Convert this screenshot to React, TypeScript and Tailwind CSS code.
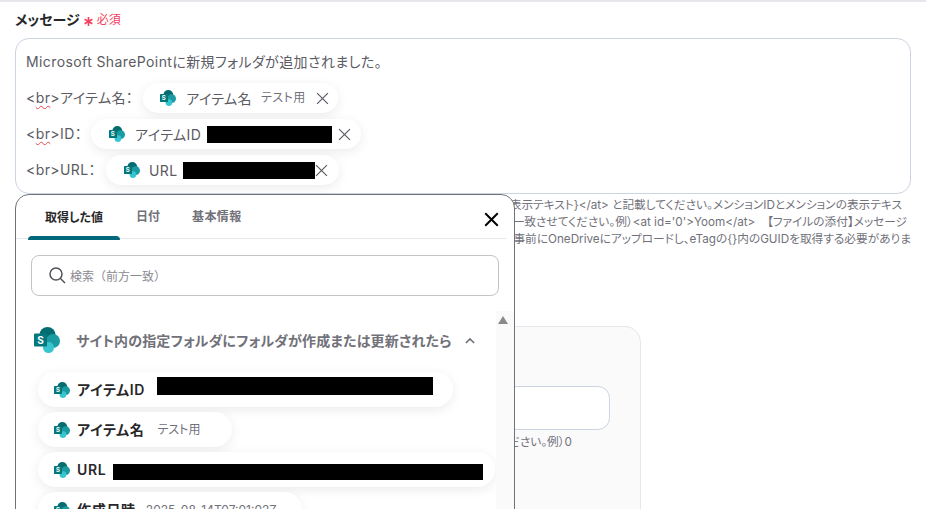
function SharePointIcon({ size }: { size: number }) {
  return (
    <svg width={size} height={size} viewBox="0 0 26 26" className="shrink-0">
      <circle cx="13.5" cy="8" r="8" fill="#036c70" />
      <circle cx="19" cy="14" r="7" fill="#1a9ba1" />
      <circle cx="14.5" cy="20.5" r="5.5" fill="#37c6d0" />
      <rect x="0" y="6.5" width="13" height="13" rx="1" fill="#03787c" />
      <text x="6.5" y="16.8" textAnchor="middle" fontSize="10" fontWeight="700" fill="#fff" fontFamily="Inter">S</text>
    </svg>
  );
}

function CloseIcon({ size, className, weight = 1.1 }: { size: number; className: string; weight?: number }) {
  return (
    <svg width={size} height={size} viewBox="0 0 12 12" className={className}>
      <path d="M1 1l10 10M11 1L1 11" stroke="currentColor" strokeWidth={weight} fill="none" />
    </svg>
  );
}

function BrLabel({ after, wavy = true }: { after: string; wavy?: boolean }) {
  return (
    <span className="whitespace-nowrap">
      &lt;
      <span className={wavy ? 'underline decoration-wavy decoration-[#e5484d] decoration-1 underline-offset-2' : ''}>br</span>
      &gt;{after}
    </span>
  );
}

function MessageRow({ label, className, children }: { label: React.ReactNode; className: string; children: React.ReactNode }) {
  return (
    <div className="flex items-center">
      <div className="pl-[10px]">{label}</div>
      <div className={`flex h-[30px] translate-y-[1px] items-center rounded-full bg-white shadow-[0_3px_12px_rgba(0,0,0,0.08)] ${className}`}>
        {children}
      </div>
    </div>
  );
}

function ValueChip({ name, width, children }: { name: string; width: string; children: React.ReactNode }) {
  return (
    <div className={`flex h-[35px] shrink-0 items-center rounded-full bg-white pl-[16px] shadow-[0_3px_12px_rgba(0,0,0,0.08)] ${width}`}>
      <SharePointIcon size={16} />
      <span className="ml-[7px] whitespace-nowrap text-[14px] font-semibold tracking-[0.7px] text-[#27272a]">{name}</span>
      {children}
    </div>
  );
}

export default function App() {
  return (
    <div className="relative h-[509px] w-[926px] overflow-hidden border-t-2 border-[#e5e7eb] bg-white pl-[15px] font-['Inter','Noto_Sans_CJK_JP',sans-serif] [font-feature-settings:'palt']">
      <div className="flex h-[36px] items-center pb-[1px]">
        <span className="text-[14px] font-semibold text-[#27272a]">メッセージ</span>
        <svg width="9" height="9" viewBox="0 0 10 10" stroke="#f43f5e" strokeWidth="1.8" className="ml-[4px] mt-[3px]">
          <path d="M5 0v10M.7 2.5l8.6 5M9.3 2.5l-8.6 5" />
        </svg>
        <span className="ml-[4px] text-[12px] text-[#f43f5e]">必須</span>
      </div>

      {/* Message input */}
      <div className="flex h-[156px] w-[896px] flex-col gap-[6px] rounded-[14px] border border-[#cbd5e1] pt-[7px] text-[14px] tracking-[0.4px] text-[#5b5b63]">
        <div className="flex h-[30px] items-center pl-[10px]">Microsoft SharePointに新規フォルダが追加されました。</div>
        <MessageRow label={<BrLabel after="アイテム名：" />} className="ml-[10px] w-[195px] pl-[17px]">
          <SharePointIcon size={16} />
          <span className="ml-[10px] whitespace-nowrap">アイテム名</span>
          <span className="ml-[9px] whitespace-nowrap text-[12px] text-[#71717a]">テスト用</span>
          <CloseIcon size={13} className="ml-[10px] text-[#5b5b63]" />
        </MessageRow>
        <MessageRow label={<BrLabel after="ID：" />} className="ml-[9px] w-[270px] pl-[18px]">
          <SharePointIcon size={16} />
          <span className="ml-[10px] whitespace-nowrap">アイテムID</span>
          <span className="ml-[6px] h-[17px] w-[125px] shrink-0 bg-black" />
          <CloseIcon size={13} className="ml-[6px] text-[#5b5b63]" />
        </MessageRow>
        <MessageRow label={<BrLabel after="URL：" wavy={false} />} className="ml-[10px] w-[233px] pl-[18px]">
          <SharePointIcon size={16} />
          <span className="ml-[9px]">URL</span>
          <span className="ml-[5px] h-[17px] w-[132px] shrink-0 bg-black" />
          <CloseIcon size={13} className="text-[#5b5b63]" />
        </MessageRow>
      </div>

      {/* Help text, mostly hidden under the popup */}
      <div className="mt-[3px] w-[896px] text-right text-[11.7px] leading-[17px] text-[#71717a]">
        <p className="whitespace-nowrap pr-[9px]">表示テキスト{'}'}&lt;/at&gt; と記載してください。メンションIDとメンションの表示テキス</p>
        <p className="whitespace-nowrap pr-[4px]">一致させてください。例）&lt;at id='0'&gt;Yoom&lt;/at&gt;　【ファイルの添付】メッセージ</p>
        <p className="whitespace-nowrap">事前にOneDriveにアップロードし、eTagの{'{}'}内のGUIDを取得する必要がありま</p>
      </div>

      {/* Card behind the popup */}
      <div className="ml-[100px] mt-[78px] h-[300px] w-[526px] rounded-[16px] border border-[#e5e7eb] bg-[#fafafa] pt-[59px]">
        <div className="h-[44px] w-[494px] rounded-[12px] border border-[#cbd5e1] bg-white" />
        <p className="mt-[4px] w-[456px] text-right text-[11.7px] leading-[17px] text-[#71717a]">ださい。例）0</p>
      </div>

      {/* Value picker popup */}
      <div className="absolute left-[15px] top-[192px] h-[340px] w-[500px] rounded-t-[14px] border border-[#71717a] bg-white">
        <div className="relative flex h-[44px] w-[490px] border-b border-[#e5e7eb] pl-[12px] text-[12px] font-semibold">
          <div className="relative flex h-[44px] w-[92px] items-center justify-center pt-[1px] text-[#27272a]">
            取得した値
            <span className="absolute bottom-[-1px] left-0 h-[4px] w-full rounded-t-[4px] bg-[#00687a]" />
          </div>
          <div className="ml-[16px] flex items-center pt-[1px] text-[#71717a]">日付</div>
          <div className="ml-[32px] flex items-center pt-[1px] tracking-[0.4px] text-[#71717a]">基本情報</div>
          <CloseIcon size={15} weight={1.6} className="absolute right-[7px] top-[17px] text-black" />
        </div>

        <div className="ml-[15px] mt-[16px] flex h-[41px] w-[468px] items-center rounded-[8px] border border-[#c4c4c8] pl-[17px]">
          <svg width="17" height="17" viewBox="0 0 17 17" fill="none" stroke="#52525b" strokeWidth="1.5">
            <circle cx="7" cy="7" r="6" />
            <path d="M11.5 11.5L16 16" />
          </svg>
          <span className="ml-[4px] pt-[2px] text-[12px] text-[#8a8a92] [font-feature-settings:normal]">検索（前方一致）</span>
        </div>

        <div className="relative mt-[15px] flex h-[300px]">
          <div className="flex w-[480px] flex-col gap-[3px]">
            <div className="flex h-[58px] items-center pl-[18px]">
              <SharePointIcon size={26} />
              <span className="ml-[16px] whitespace-nowrap text-[14px] font-semibold tracking-[0.15px] text-[#71717a]">サイト内の指定フォルダにフォルダが作成または更新されたら</span>
              <svg width="10" height="7" viewBox="0 0 12 8" fill="none" stroke="#71717a" strokeWidth="2" className="ml-[14px]">
                <path d="M1 7l5-5 5 5" />
              </svg>
            </div>
            <div className="flex flex-col gap-[5px] pl-[22px]">
              <ValueChip name="アイテムID" width="w-[415px]">
                <span className="ml-[12px] -mt-[7px] h-[18px] w-[276px] shrink-0 bg-black" />
              </ValueChip>
              <ValueChip name="アイテム名" width="w-[194px]">
                <span className="ml-[13px] whitespace-nowrap text-[12px] text-[#71717a]">テスト用</span>
              </ValueChip>
              <ValueChip name="URL" width="w-[457px]">
                <span className="ml-[7px] mt-[4px] h-[16px] w-[370px] shrink-0 bg-black" />
              </ValueChip>
              <ValueChip name="作成日時" width="w-[264px]">
                <span className="ml-[10px] whitespace-nowrap text-[12px] text-[#71717a]">2025-08-14T07:01:02Z</span>
              </ValueChip>
            </div>
          </div>
          <div className="flex h-full w-[18px] justify-start bg-[#fafafa] pl-[2px] pt-[5px]">
            <span className="h-0 w-0 border-x-[5px] border-b-[8px] border-x-transparent border-b-[#8a8a8a]" />
          </div>
        </div>
      </div>
    </div>
  );
}
